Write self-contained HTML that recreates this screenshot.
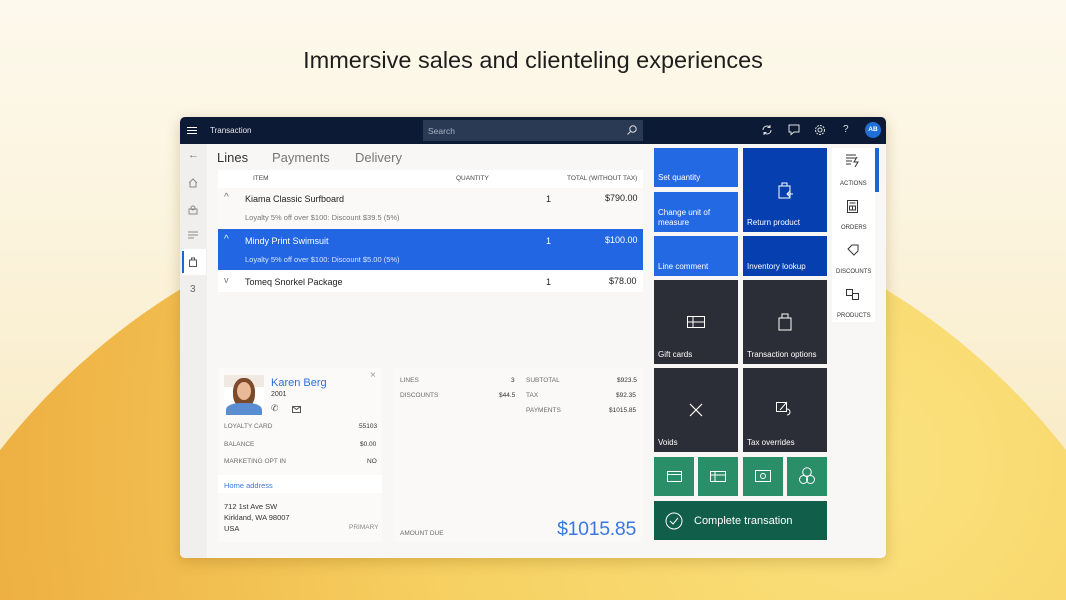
<!DOCTYPE html>
<html style="overflow:hidden;width:1066px;height:600px"><head><meta charset="utf-8"><style>
*{margin:0;padding:0;box-sizing:border-box}
body{width:1066px;height:600px;overflow:hidden;font-family:"Liberation Sans",sans-serif;position:relative;background:linear-gradient(#fdf9ec,#fbf3dc 40%,#f7e6b8)}
.clip{position:absolute;left:0;top:0;width:1066px;height:600px;overflow:hidden}
.circle{position:absolute;left:-143px;top:190px;width:1352px;height:1352px;border-radius:50%;background:radial-gradient(circle at 75% 20%,#fbe27e 0%,#f6d061 30%,#efb446 55%,#e99d35 80%)}
.abs{position:absolute}
h1{position:absolute;top:47px;width:100%;text-align:center;font-weight:400;font-size:23.5px;color:#1e1e1e}
.win{position:absolute;left:180px;top:117px;width:706px;height:441px;background:#f8f7f6;border-radius:5px;overflow:hidden;box-shadow:0 4px 14px rgba(120,80,0,.25)}
.top{position:absolute;left:0;top:0;width:706px;height:27px;background:#0d1a36}
.t{position:absolute;white-space:nowrap}
.r{position:absolute;white-space:nowrap;text-align:right}
.tile{position:absolute;color:#fff;font-size:8px}
.tile span{position:absolute;left:4px;bottom:4px;line-height:10px}
.lb{background:#2469e4}.db{background:#063fb0}.dk{background:#2b2e36}.gr{background:#2a8e68}
.sm{font-size:6.5px;color:#6b6b6b}
</style></head><body>
<div class="clip"><div class="circle"></div></div>
<h1>Immersive sales and clienteling experiences</h1>
<div class="win">
 <div class="top">
  <svg class="abs" style="left:7px;top:9px" width="10" height="9"><path d="M0 1.5h10M0 4.5h10M0 7.5h10" stroke="#fff" stroke-width="1"/></svg>
  <div class="t" style="left:30px;top:9px;font-size:8px;color:#e8e8e8">Transaction</div>
  <div class="abs" style="left:243px;top:3px;width:220px;height:21px;background:#2a3a55"></div>
  <div class="t" style="left:248px;top:9px;font-size:8.5px;color:#a9b2c2">Search</div>
  <svg class="abs" style="left:447px;top:8px" width="10" height="10"><circle cx="6" cy="4" r="3.2" stroke="#ddd" fill="none"/><path d="M3.7 6.3L0.5 9.5" stroke="#ddd"/></svg>
  <svg class="abs" style="left:581px;top:7px" width="12" height="12"><path d="M2 6a4 4 0 0 1 7-2.6M10 6a4 4 0 0 1-7 2.6M9 1v2.5h-2.5M3 11V8.5h2.5" stroke="#ddd" fill="none"/></svg>
  <svg class="abs" style="left:608px;top:7px" width="12" height="12"><path d="M1 1h10v7H6l-3 2.5V8H1z" stroke="#ddd" fill="none"/></svg>
  <svg class="abs" style="left:634px;top:7px" width="12" height="12"><circle cx="6" cy="6" r="4.5" stroke="#ddd" fill="none" stroke-dasharray="2 1"/><circle cx="6" cy="6" r="2" stroke="#ddd" fill="none"/></svg>
  <div class="t" style="left:663px;top:7px;font-size:10px;color:#ddd">?</div>
  <div class="abs" style="left:685px;top:5px;width:16px;height:16px;border-radius:50%;background:#1f6fd6;color:#fff;font-size:6.5px;font-weight:bold;text-align:center;line-height:16px">AB</div>
 </div>
 <div class="abs" style="left:0;top:27px;width:27px;height:414px;background:#f0efee"></div>
 <div class="t" style="left:8px;top:32px;font-size:11px;color:#777">←</div>
 <svg class="abs" style="left:8px;top:61px" width="10" height="10"><path d="M1 5L5 1l4 4M2 4.5V9h6V4.5" stroke="#888" fill="none"/></svg>
 <svg class="abs" style="left:8px;top:88px" width="10" height="10"><rect x="1" y="4" width="8" height="5" stroke="#888" fill="none"/><circle cx="5" cy="3" r="2" stroke="#888" fill="none"/></svg>
 <svg class="abs" style="left:8px;top:114px" width="10" height="8"><path d="M0 1h10M0 4h10M0 7h6" stroke="#888"/></svg>
 <div class="abs" style="left:2px;top:132px;width:24px;height:26px;background:#fff"></div>
 <div class="abs" style="left:2px;top:134px;width:2px;height:22px;background:#1f63d6"></div>
 <svg class="abs" style="left:9px;top:140px" width="8" height="10"><path d="M.5 3h7v6.5h-7zM2.5 3V1h3v2" stroke="#555" fill="none"/></svg>
 <div class="t" style="left:10px;top:167px;font-size:10px;color:#666">3</div>

 <div class="t" style="left:37px;top:33px;font-size:13px;color:#333">Lines</div>
 <div class="t" style="left:92px;top:33px;font-size:13px;color:#777">Payments</div>
 <div class="t" style="left:175px;top:33px;font-size:13px;color:#777">Delivery</div>
 <div class="abs" style="left:38px;top:53px;width:425px;height:122px;background:#fff"></div>
 <div class="t sm" style="left:73px;top:58px;color:#444">ITEM</div>
 <div class="t sm" style="left:276px;top:58px;color:#444">QUANTITY</div>
 <div class="t sm" style="left:387px;top:58px;color:#444">TOTAL (WITHOUT TAX)</div>
 <div class="abs" style="left:38px;top:71px;width:425px;height:41px;background:#faf9f8"></div>
 <div class="t" style="left:44px;top:75px;font-size:10px;color:#777">^</div>
 <div class="t" style="left:65px;top:77px;font-size:9px;color:#222">Kiama Classic Surfboard</div>
 <div class="t" style="left:366px;top:77px;font-size:9px;color:#222">1</div>
 <div class="t" style="left:425px;top:76px;font-size:9px;color:#222">$790.00</div>
 <div class="t" style="left:65px;top:96px;font-size:7.5px;color:#777">Loyalty 5% off over $100: Discount $39.5 (5%)</div>
 <div class="abs" style="left:38px;top:112px;width:425px;height:41px;background:#2266e3"></div>
 <div class="t" style="left:44px;top:117px;font-size:10px;color:#cfe">^</div>
 <div class="t" style="left:65px;top:119px;font-size:9px;color:#fff">Mindy Print Swimsuit</div>
 <div class="t" style="left:366px;top:119px;font-size:9px;color:#fff">1</div>
 <div class="t" style="left:425px;top:118px;font-size:9px;color:#fff">$100.00</div>
 <div class="t" style="left:65px;top:138px;font-size:7.5px;color:#dbe6ff">Loyalty 5% off over $100: Discount $5.00 (5%)</div>
 <div class="t" style="left:44px;top:158px;font-size:9px;color:#777">v</div>
 <div class="t" style="left:65px;top:160px;font-size:9px;color:#222">Tomeq Snorkel Package</div>
 <div class="t" style="left:366px;top:160px;font-size:9px;color:#222">1</div>
 <div class="t" style="left:429px;top:159px;font-size:9px;color:#222">$78.00</div>

 <div class="abs" style="left:38px;top:251px;width:164px;height:174px;background:#fbfaf9"></div>
 <div class="abs" style="left:44px;top:258px;width:40px;height:40px;background:linear-gradient(#efe9e2 0,#efe9e2 30%,#fff 30%);overflow:hidden">
  <div class="abs" style="left:9px;top:3px;width:22px;height:30px;border-radius:45%;background:#7a4a2a"></div>
  <div class="abs" style="left:13px;top:7px;width:14px;height:18px;border-radius:50%;background:#e9b998"></div>
  <div class="abs" style="left:2px;top:28px;width:36px;height:16px;border-radius:40% 40% 0 0;background:#5b8ed0"></div>
 </div>
 <div class="t" style="left:91px;top:260px;font-size:11px;color:#2f6fd9">Karen Berg</div>
 <div class="t" style="left:91px;top:274px;font-size:7px;color:#333">2001</div>
 <div class="t" style="left:91px;top:286px;font-size:9px;color:#555">✆</div>
 <svg class="abs" style="left:112px;top:289px" width="9" height="7"><rect x=".5" y=".5" width="8" height="6" stroke="#555" fill="none"/><path d="M.5.5l4 3 4-3" stroke="#555" fill="none"/></svg>
 <div class="t" style="left:190px;top:253px;font-size:10px;color:#999">×</div>
 <div class="t sm" style="left:44px;top:306px">LOYALTY CARD</div><div class="t sm" style="left:179px;top:306px;color:#333">55103</div>
 <div class="t sm" style="left:44px;top:324px">BALANCE</div><div class="t sm" style="left:180px;top:324px;color:#333">$0.00</div>
 <div class="t sm" style="left:44px;top:341px">MARKETING OPT IN</div><div class="t sm" style="left:187px;top:341px;color:#333">NO</div>
 <div class="abs" style="left:38px;top:358px;width:164px;height:18px;background:#fff"></div>
 <div class="t" style="left:44px;top:364px;font-size:7.5px;color:#3b78de">Home address</div>
 <div class="t" style="left:44px;top:384px;font-size:7.5px;color:#333;line-height:11px">712 1st Ave SW<br>Kirkland, WA 98007<br>USA</div>
 <div class="t sm" style="left:169px;top:407px;color:#888">PRIMARY</div>

 <div class="abs" style="left:213px;top:251px;width:250px;height:174px;background:#faf9f8"></div>
 <div class="t sm" style="left:220px;top:260px">LINES</div><div class="t sm" style="left:331px;top:260px;color:#333">3</div>
 <div class="t sm" style="left:220px;top:275px">DISCOUNTS</div><div class="t sm" style="left:319px;top:275px;color:#333">$44.5</div>
 <div class="t sm" style="left:346px;top:260px">SUBTOTAL</div><div class="t sm" style="left:437px;top:260px;color:#333">$923.5</div>
 <div class="t sm" style="left:346px;top:275px">TAX</div><div class="t sm" style="left:436px;top:275px;color:#333">$92.35</div>
 <div class="t sm" style="left:346px;top:290px">PAYMENTS</div><div class="t sm" style="left:429px;top:290px;color:#333">$1015.85</div>
 <div class="t sm" style="left:220px;top:413px">AMOUNT DUE</div>
 <div class="r" style="right:250px;top:401px;font-size:19.5px;color:#3b78de;letter-spacing:-0.3px">$1015.85</div>

 <div class="tile lb" style="left:474px;top:31px;width:84px;height:39px"><span>Set quantity</span></div>
 <div class="tile lb" style="left:474px;top:75px;width:84px;height:40px"><span>Change unit of<br>measure</span></div>
 <div class="tile lb" style="left:474px;top:119px;width:84px;height:40px"><span>Line comment</span></div>
 <div class="tile db" style="left:563px;top:31px;width:84px;height:84px"><svg class="abs" style="left:35px;top:33px" width="16" height="18"><path d="M1 5h11v12H1zM4 5V2h5v3M9 13h6M12 10l-3 3 3 3" stroke="#fff" fill="none"/></svg><span>Return product</span></div>
 <div class="tile db" style="left:563px;top:119px;width:84px;height:40px"><span>Inventory lookup</span></div>
 <div class="tile dk" style="left:474px;top:163px;width:84px;height:84px"><svg class="abs" style="left:33px;top:36px" width="18" height="12"><rect x=".5" y=".5" width="17" height="11" stroke="#fff" fill="none"/><path d="M6 .5v11M.5 6h17" stroke="#fff"/></svg><span>Gift cards</span></div>
 <div class="tile dk" style="left:563px;top:163px;width:84px;height:84px"><svg class="abs" style="left:35px;top:33px" width="14" height="18"><path d="M1 5h12v12H1zM4 5V1h6v4" stroke="#fff" fill="none"/></svg><span>Transaction options</span></div>
 <div class="tile dk" style="left:474px;top:251px;width:84px;height:84px"><svg class="abs" style="left:35px;top:35px" width="14" height="14"><path d="M1 1l12 12M13 1L1 13" stroke="#fff" stroke-width="1.2"/></svg><span>Voids</span></div>
 <div class="tile dk" style="left:563px;top:251px;width:84px;height:84px"><svg class="abs" style="left:33px;top:33px" width="18" height="16"><path d="M.5 1.5h10v9H.5zM4 9l7-8M11 8a3 3 0 1 1 0 6" stroke="#fff" fill="none"/></svg><span>Tax overrides</span></div>
 <div class="tile gr" style="left:474px;top:340px;width:40px;height:39px"><svg class="abs" style="left:13px;top:14px" width="15" height="11"><rect x=".5" y=".5" width="14" height="10" stroke="#fff" fill="none"/><path d="M.5 3.5h14" stroke="#fff"/></svg></div>
 <div class="tile gr" style="left:518px;top:340px;width:40px;height:39px"><svg class="abs" style="left:12px;top:14px" width="16" height="11"><rect x=".5" y=".5" width="15" height="10" stroke="#fff" fill="none"/><path d="M5 .5v10M.5 4h15" stroke="#fff"/></svg></div>
 <div class="tile gr" style="left:563px;top:340px;width:40px;height:39px"><svg class="abs" style="left:12px;top:13px" width="16" height="12"><rect x=".5" y=".5" width="15" height="11" stroke="#fff" fill="none"/><circle cx="8" cy="6" r="2.5" stroke="#fff" fill="none"/></svg></div>
 <div class="tile gr" style="left:607px;top:340px;width:40px;height:39px"><svg class="abs" style="left:12px;top:10px" width="16" height="18"><circle cx="8" cy="5" r="4.3" stroke="#fff" fill="none"/><circle cx="4.5" cy="12.5" r="4" stroke="#fff" fill="none"/><circle cx="11.5" cy="12.5" r="4" stroke="#fff" fill="none"/></svg></div>
 <div class="tile" style="left:474px;top:384px;width:173px;height:39px;background:#115e4a"><svg class="abs" style="left:11px;top:11px" width="18" height="18"><circle cx="9" cy="9" r="8" stroke="#fff" fill="none"/><path d="M5 9l3 3 5-6" stroke="#fff" fill="none"/></svg><div class="t" style="left:40px;top:14px;font-size:11px">Complete transation</div></div>

 <div class="abs" style="left:652px;top:31px;width:43px;height:174px;background:#fff"></div>
 <div class="abs" style="left:695px;top:31px;width:4px;height:44px;background:#1f63d6"></div>
 <svg class="abs" style="left:666px;top:37px" width="14" height="14"><path d="M0 1h10M0 4h10M0 7h6M0 10h5M11 3l-3 5h4l-3 5" stroke="#333" fill="none"/></svg>
 <div class="t" style="left:660px;top:64px;font-size:6px;color:#333">ACTIONS</div>
 <svg class="abs" style="left:667px;top:83px" width="11" height="13"><rect x=".5" y=".5" width="10" height="12" stroke="#333" fill="none"/><path d="M2.5 3h6M2.5 6h6v4h-6zM5.5 6v4" stroke="#333" fill="none"/></svg>
 <div class="t" style="left:661px;top:108px;font-size:6px;color:#333">ORDERS</div>
 <svg class="abs" style="left:667px;top:127px" width="12" height="12"><path d="M1 5L5 1h6v6l-4 4z" stroke="#333" fill="none"/></svg>
 <div class="t" style="left:656px;top:152px;font-size:6px;color:#333">DISCOUNTS</div>
 <svg class="abs" style="left:666px;top:172px" width="14" height="12"><rect x=".5" y=".5" width="6" height="6" stroke="#333" fill="none"/><rect x="6.5" y="4.5" width="6" height="6" stroke="#333" fill="none"/></svg>
 <div class="t" style="left:657px;top:196px;font-size:6px;color:#333">PRODUCTS</div>
</div>
</body></html>
